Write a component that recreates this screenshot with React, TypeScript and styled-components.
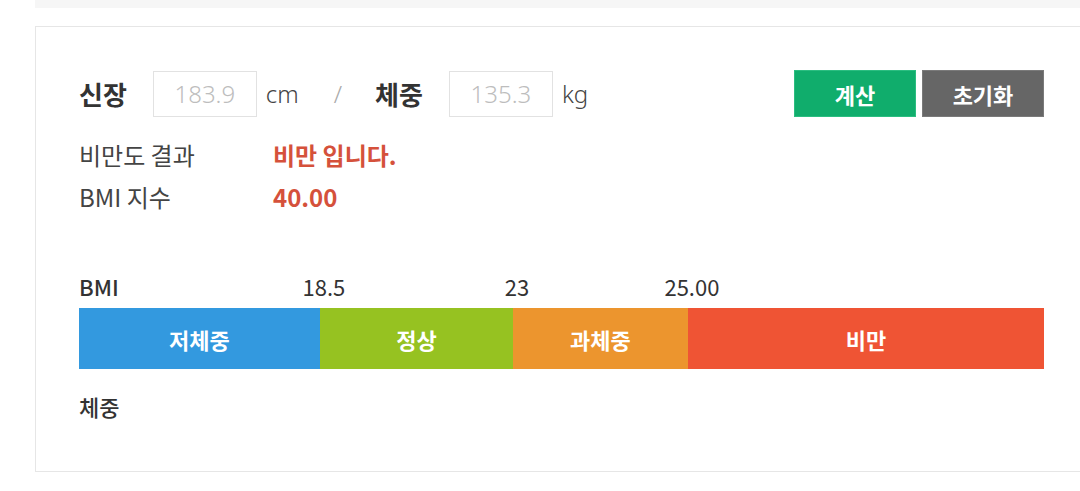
import React from 'react'
import styled, { createGlobalStyle } from 'styled-components'

const GlobalStyle = createGlobalStyle`
  html, body {
    margin: 0;
    padding: 0;
    background: #fff;
    overflow: hidden;
  }
  body {
    font-family: 'Noto Sans CJK KR', 'Noto Sans', sans-serif;
    color: #333;
  }
  * {
    box-sizing: border-box;
  }
`

const Page = styled.div`
  padding-left: 35px;
  width: 1100px;
`

const TopStrip = styled.div`
  width: 1053px;
  height: 8px;
  background-color: #f6f6f6;
`

const Card = styled.section`
  width: 1053px;
  margin-top: 18px;
  padding: 43px 43px 50px;
  border: 1px solid #e6e6e6;
  background-color: #fff;
`

const InputRow = styled.div`
  display: flex;
  align-items: center;
  height: 47px;
`

const FieldLabel = styled.span`
  font-size: 26px;
  font-weight: 700;
  color: #333;
  line-height: 1;
  margin-right: 26px;
`

const ValueInput = styled.input`
  width: 104px;
  height: 46px;
  border: 1px solid #e2e2e2;
  background: #fff;
  font-family: 'Noto Sans', sans-serif;
  font-size: 24px;
  font-weight: 300;
  text-align: center;
  color: #444;
  padding: 0;
  outline: none;
  &::placeholder {
    color: #bdbdbd;
  }
`

const Unit = styled.span`
  font-family: 'Noto Sans', sans-serif;
  font-size: 24px;
  font-weight: 300;
  color: #444;
  margin-left: 9px;
`

const Divider = styled.span`
  font-family: 'Noto Sans', sans-serif;
  font-size: 24px;
  font-weight: 300;
  color: #aaa;
  margin: 0 33px 0 35px;
`

const Buttons = styled.div`
  display: flex;
  gap: 6px;
  margin-left: auto;
`

const ActionButton = styled.button<{ $variant: 'primary' | 'secondary' }>`
  width: 122px;
  height: 47px;
  border: 1px solid ${(p) => (p.$variant === 'primary' ? '#2bbd80' : '#7a7a7a')};
  background-color: ${(p) => (p.$variant === 'primary' ? '#10ad6c' : '#666666')};
  color: #fff;
  font-family: 'Noto Sans CJK KR', sans-serif;
  font-size: 22px;
  font-weight: 700;
  cursor: pointer;
  padding: 0;
`

const Result = styled.dl`
  display: grid;
  grid-template-columns: 194px 1fr;
  margin: 17px 0 0;
  line-height: 42px;
  font-size: 24px;
`

const ResultTerm = styled.dt`
  color: #444;
  font-weight: 400;
`

const ResultValue = styled.dd`
  margin: 0;
  color: #d5513b;
  font-weight: 700;
`

const Scale = styled.div`
  margin-top: 53px;
`

const ScaleLabels = styled.div`
  display: flex;
  height: 30px;
  line-height: 30px;
  margin-bottom: 7px;
  font-size: 22px;
  color: #333;
`

const ScaleCol = styled.div<{ $width: number }>`
  flex: 0 0 ${(p) => p.$width}%;
  display: flex;
  justify-content: space-between;
  white-space: nowrap;
`

const ScaleTitle = styled.span`
  font-weight: 500;
`

const Tick = styled.span`
  margin-left: auto;
  transform: translateX(calc(50% + 4px));
`

const Bar = styled.div`
  display: flex;
  height: 61px;
`

const Segment = styled.div<{ $width: number; $color: string }>`
  flex: 0 0 ${(p) => p.$width}%;
  display: flex;
  align-items: center;
  justify-content: center;
  background-color: ${(p) => p.$color};
  color: #fff;
  font-size: 22px;
  font-weight: 700;
`

const WeightLabel = styled.div`
  margin-top: 22px;
  line-height: 30px;
  font-size: 22px;
  font-weight: 500;
  color: #333;
`

const segments = [
  { name: '저체중', width: 24.97, color: '#3399df', tick: '18.5' },
  { name: '정상', width: 20, color: '#96c221', tick: '23' },
  { name: '과체중', width: 18.13, color: '#ec952e', tick: '25.00' },
  { name: '비만', width: 36.9, color: '#ef5434', tick: '' },
]

const App: React.FC = () => {
  return (
    <Page>
      <GlobalStyle />
      <TopStrip />
      <Card>
        <InputRow>
          <FieldLabel>신장</FieldLabel>
          <ValueInput placeholder="183.9" />
          <Unit>cm</Unit>
          <Divider>/</Divider>
          <FieldLabel>체중</FieldLabel>
          <ValueInput placeholder="135.3" />
          <Unit>kg</Unit>
          <Buttons>
            <ActionButton $variant="primary">계산</ActionButton>
            <ActionButton $variant="secondary">초기화</ActionButton>
          </Buttons>
        </InputRow>

        <Result>
          <ResultTerm>비만도 결과</ResultTerm>
          <ResultValue>비만 입니다.</ResultValue>
          <ResultTerm>BMI 지수</ResultTerm>
          <ResultValue>40.00</ResultValue>
        </Result>

        <Scale>
          <ScaleLabels>
            {segments.map((s, i) => (
              <ScaleCol key={s.name} $width={s.width}>
                {i === 0 && <ScaleTitle>BMI</ScaleTitle>}
                {s.tick && <Tick>{s.tick}</Tick>}
              </ScaleCol>
            ))}
          </ScaleLabels>
          <Bar>
            {segments.map((s) => (
              <Segment key={s.name} $width={s.width} $color={s.color}>
                {s.name}
              </Segment>
            ))}
          </Bar>
        </Scale>

        <WeightLabel>체중</WeightLabel>
      </Card>
    </Page>
  )
}

export default App
